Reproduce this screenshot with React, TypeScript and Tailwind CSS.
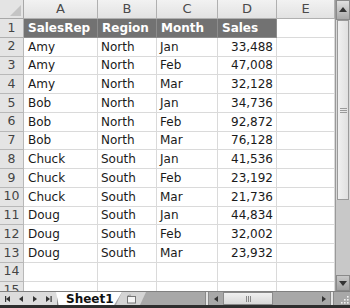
import React from "react";

const rows: [string, string, string, string][] = [
  ["Amy", "North", "Jan", "33,488"],
  ["Amy", "North", "Feb", "47,008"],
  ["Amy", "North", "Mar", "32,128"],
  ["Bob", "North", "Jan", "34,736"],
  ["Bob", "North", "Feb", "92,872"],
  ["Bob", "North", "Mar", "76,128"],
  ["Chuck", "South", "Jan", "41,536"],
  ["Chuck", "South", "Feb", "23,192"],
  ["Chuck", "South", "Mar", "21,736"],
  ["Doug", "South", "Jan", "44,834"],
  ["Doug", "South", "Feb", "32,002"],
  ["Doug", "South", "Mar", "23,932"],
  ["", "", "", ""],
  ["", "", "", ""],
];

const font = { fontFamily: '"DejaVu Sans", Verdana, sans-serif' };

function Tri({ dir, bar }: { dir: "l" | "r" | "u" | "d"; bar?: boolean }) {
  const paths: Record<string, string> = {
    l: "M5 1 L1 4 L5 7 Z",
    r: "M1 1 L5 4 L1 7 Z",
    u: "M0 6 L4 1 L8 6 Z",
    d: "M0 2 L4 7 L8 2 Z",
  };
  return (
    <svg width={dir === "u" || dir === "d" ? 8 : 7} height="8" viewBox={dir === "u" || dir === "d" ? "0 0 8 8" : "0 0 7 8"}>
      <path d={paths[dir]} fill="#333" />
      {bar && dir === "l" && <rect x="0" y="1" width="1.2" height="6" fill="#333" />}
      {bar && dir === "r" && <rect x="5.5" y="1" width="1.2" height="6" fill="#333" />}
    </svg>
  );
}

export default function App() {
  const cols = ["A", "B", "C", "D", "E"];
  return (
    <div className="w-[350px] h-[308px] flex flex-col overflow-hidden bg-white" style={font}>
      <div className="flex h-[291px] overflow-hidden">
        <div className="w-[335px] h-[291px] overflow-hidden">
          <div className="grid grid-cols-[24px_74px_59px_61px_59px_58px] grid-rows-[19px_repeat(15,18.75px)]">
            {/* corner */}
            <div className="bg-[#e4e4e4] border-r border-b border-[#a8a8a8] flex items-end justify-end pr-[2px] pb-[2px]">
              <svg width="11" height="11" viewBox="0 0 11 11">
                <path d="M11 0 L11 11 L0 11 Z" fill="#c4c4c4" />
              </svg>
            </div>
            {cols.map((c) => (
              <div
                key={c}
                className="bg-gradient-to-b from-[#f2f2f2] to-[#e2e2e2] border-r border-b border-[#b0b0b0] flex items-center justify-center text-[13px] text-[#4a4a4a]"
              >
                {c}
              </div>
            ))}
            {/* row 1 header */}
            <div className="bg-[#e4e4e4] border-r border-b border-[#b0b0b0] flex items-center justify-center text-[12.5px] text-[#444]">
              1
            </div>
            {["SalesRep", "Region", "Month", "Sales"].map((h) => (
              <div
                key={h}
                className="bg-[#727272] border-r border-b border-[#8c8c8c] flex items-center pl-[4px] text-[12px] font-bold text-white"
              >
                {h}
              </div>
            ))}
            <div className="border-r border-b border-[#dadada]" />
            {rows.map((r, i) => (
              <React.Fragment key={i}>
                <div className="bg-[#e4e4e4] border-r border-b border-[#b8b8b8] flex items-center justify-center text-[12.5px] text-[#444]">
                  {i + 2}
                </div>
                <div className="border-r border-b border-[#dadada] flex items-center pl-[4px] text-[12px] text-[#1a1a1a]">
                  {r[0]}
                </div>
                <div className="border-r border-b border-[#dadada] flex items-center pl-[3px] text-[12px] text-[#1a1a1a]">
                  {r[1]}
                </div>
                <div className="border-r border-b border-[#dadada] flex items-center pl-[3px] text-[12px] text-[#1a1a1a]">
                  {r[2]}
                </div>
                <div className="border-r border-b border-[#dadada] flex items-center justify-end pr-[3px] text-[12px] text-[#1a1a1a]">
                  {r[3]}
                </div>
                <div className="border-r border-b border-[#dadada]" />
              </React.Fragment>
            ))}
          </div>
        </div>
        {/* vertical scrollbar */}
        <div className="w-[15px] h-[291px] flex flex-col bg-[#d8d8d8] border-l border-[#9a9a9a]">
          <div className="h-[20px] bg-gradient-to-b from-[#e0e0e0] to-[#a8a8a8] border border-[#8a8a8a] flex items-center justify-center">
            <Tri dir="u" />
          </div>
          <div className="h-[180px] mx-[1px] bg-gradient-to-r from-[#f0f0f0] to-[#e0e0e0] border border-[#9a9a9a] flex flex-col items-center justify-center gap-[1px]">
            <div className="w-[7px] h-[1px] bg-[#9a9a9a]" />
            <div className="w-[7px] h-[1px] bg-[#9a9a9a]" />
            <div className="w-[7px] h-[1px] bg-[#9a9a9a]" />
          </div>
          <div className="flex-1 bg-[#c8c8c8]" />
          <div className="h-[16px] bg-gradient-to-b from-[#c8c8c8] to-[#a0a0a0] border border-[#8a8a8a] flex items-center justify-center">
            <Tri dir="d" />
          </div>
        </div>
      </div>
      {/* tab bar */}
      <div className="h-[14px] flex bg-[#a8a8a8] border-t border-[#808080]">
        <div className="w-[58px] bg-[#dcdcdc] border-r border-[#8a8a8a] flex items-center justify-around px-[2px]">
          <Tri dir="l" bar />
          <Tri dir="l" />
          <Tri dir="r" />
          <Tri dir="r" bar />
        </div>
        <div
          className="w-[66px] -ml-[2px] bg-white flex items-center pl-[10px] text-[12px] font-bold text-[#111]"
          style={{ clipPath: "polygon(0 0, 100% 0, 88% 100%, 4% 100%)" }}
        >
          Sheet1
        </div>
        <div
          className="w-[30px] -ml-[6px] bg-[#d4d4d4] flex items-center justify-center"
          style={{ clipPath: "polygon(20% 0, 100% 0, 80% 100%, 0 100%)" }}
        >
          <svg width="11" height="10" viewBox="0 0 11 10">
            <rect x="1.5" y="2.5" width="8" height="6.5" fill="#f4f4f4" stroke="#777" />
            <path d="M2 1 L3 3 M4 0.5 L4 2.5" stroke="#777" strokeWidth="0.8" />
          </svg>
        </div>
        <div className="flex-1" />
        <div className="w-[4px] bg-[#e4e4e4] border-x border-[#8a8a8a]" />
        <div className="w-[14px] flex items-center justify-center">
          <Tri dir="l" />
        </div>
        <div className="w-[50px] bg-gradient-to-b from-[#f0f0f0] to-[#d8d8d8] border border-[#8a8a8a] flex items-center justify-center gap-[1px]">
          <div className="w-[1px] h-[6px] bg-[#888]" />
          <div className="w-[1px] h-[6px] bg-[#888]" />
          <div className="w-[1px] h-[6px] bg-[#888]" />
        </div>
        <div className="w-[45px]" />
        <div className="w-[12px] flex items-center justify-center">
          <Tri dir="r" />
        </div>
        <div className="w-[4px] bg-[#e4e4e4] border-x border-[#8a8a8a]" />
        <div className="w-[16px] flex items-end justify-end pr-[1px] pb-[1px]">
          <svg width="10" height="10" viewBox="0 0 10 10">
            {[
              [8, 2],
              [8, 5],
              [5, 5],
              [8, 8],
              [5, 8],
              [2, 8],
            ].map(([x, y], k) => (
              <rect key={k} x={x} y={y} width="1.6" height="1.6" fill="#f2f2f2" />
            ))}
          </svg>
        </div>
      </div>
      <div className="h-[3px] bg-[#2e2e2e]" />
    </div>
  );
}
